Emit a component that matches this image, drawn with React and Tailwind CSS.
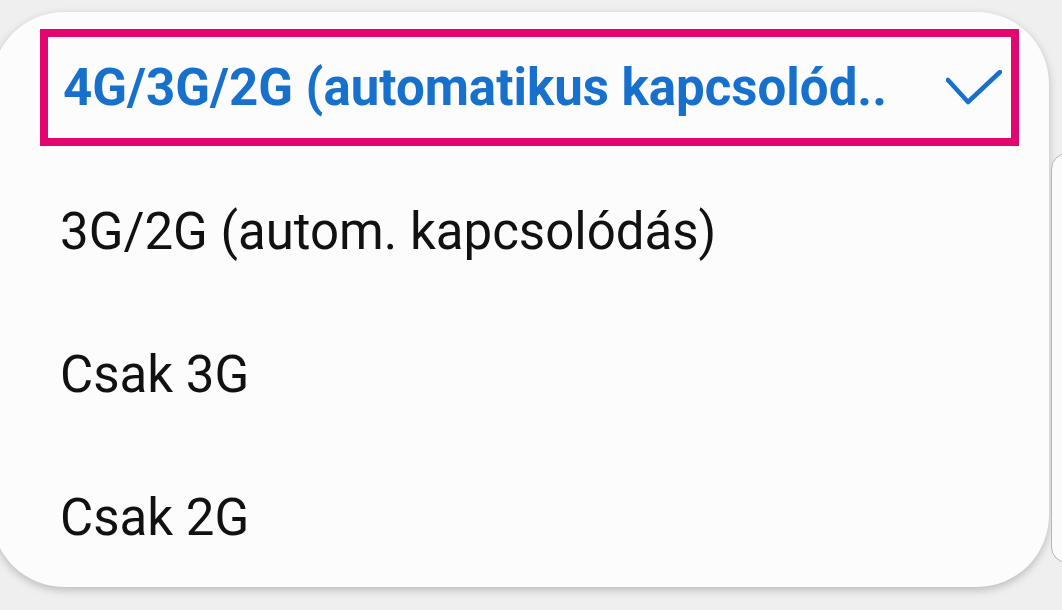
const rows = ["3G/2G (autom. kapcsolódás)", "Csak 3G", "Csak 2G"]

export default function App() {
  return (
    <div className="w-[1062px] h-[610px] overflow-hidden flex bg-[#efefef] font-['Roboto',sans-serif]">
      {/* Dialog card */}
      <div className="shrink-0 mt-[12px] ml-[-8px] w-[1057px] h-[575px] rounded-[72px] bg-[#fcfcfc] shadow-[0_3px_8px_rgba(0,0,0,0.22)] overflow-hidden pl-[48px] pt-[17px]">
        {/* Selected option */}
        <div className="w-[979px] h-[117px] border-[8px] border-[#e2066f] flex items-center pl-[15px] pr-[9px]">
          <span className="text-[51px] leading-none font-bold text-[#1670cc]">
            4G/3G/2G (automatikus kapcsolód..
          </span>
          <svg className="ml-auto" width="56" height="36" viewBox="0 0 56 36" fill="none">
            <path d="M2 10 L22 32 L54 2" stroke="#1670cc" strokeWidth="4.5" strokeLinecap="round" strokeLinejoin="round" />
          </svg>
        </div>

        <div className="mt-[14px]">
          {rows.map((r) => (
            <div key={r} className="h-[143px] flex items-center pl-[20px]">
              <span className="text-[51px] leading-none text-[#111]">{r}</span>
            </div>
          ))}
        </div>
      </div>

      {/* Card peeking behind on the right */}
      <div className="shrink-0 ml-[2px] mt-[153px] w-[40px] h-[410px] rounded-[16px] border-[1.5px] border-[#b5b5b5] bg-[#fbfbfb]" />
    </div>
  )
}
